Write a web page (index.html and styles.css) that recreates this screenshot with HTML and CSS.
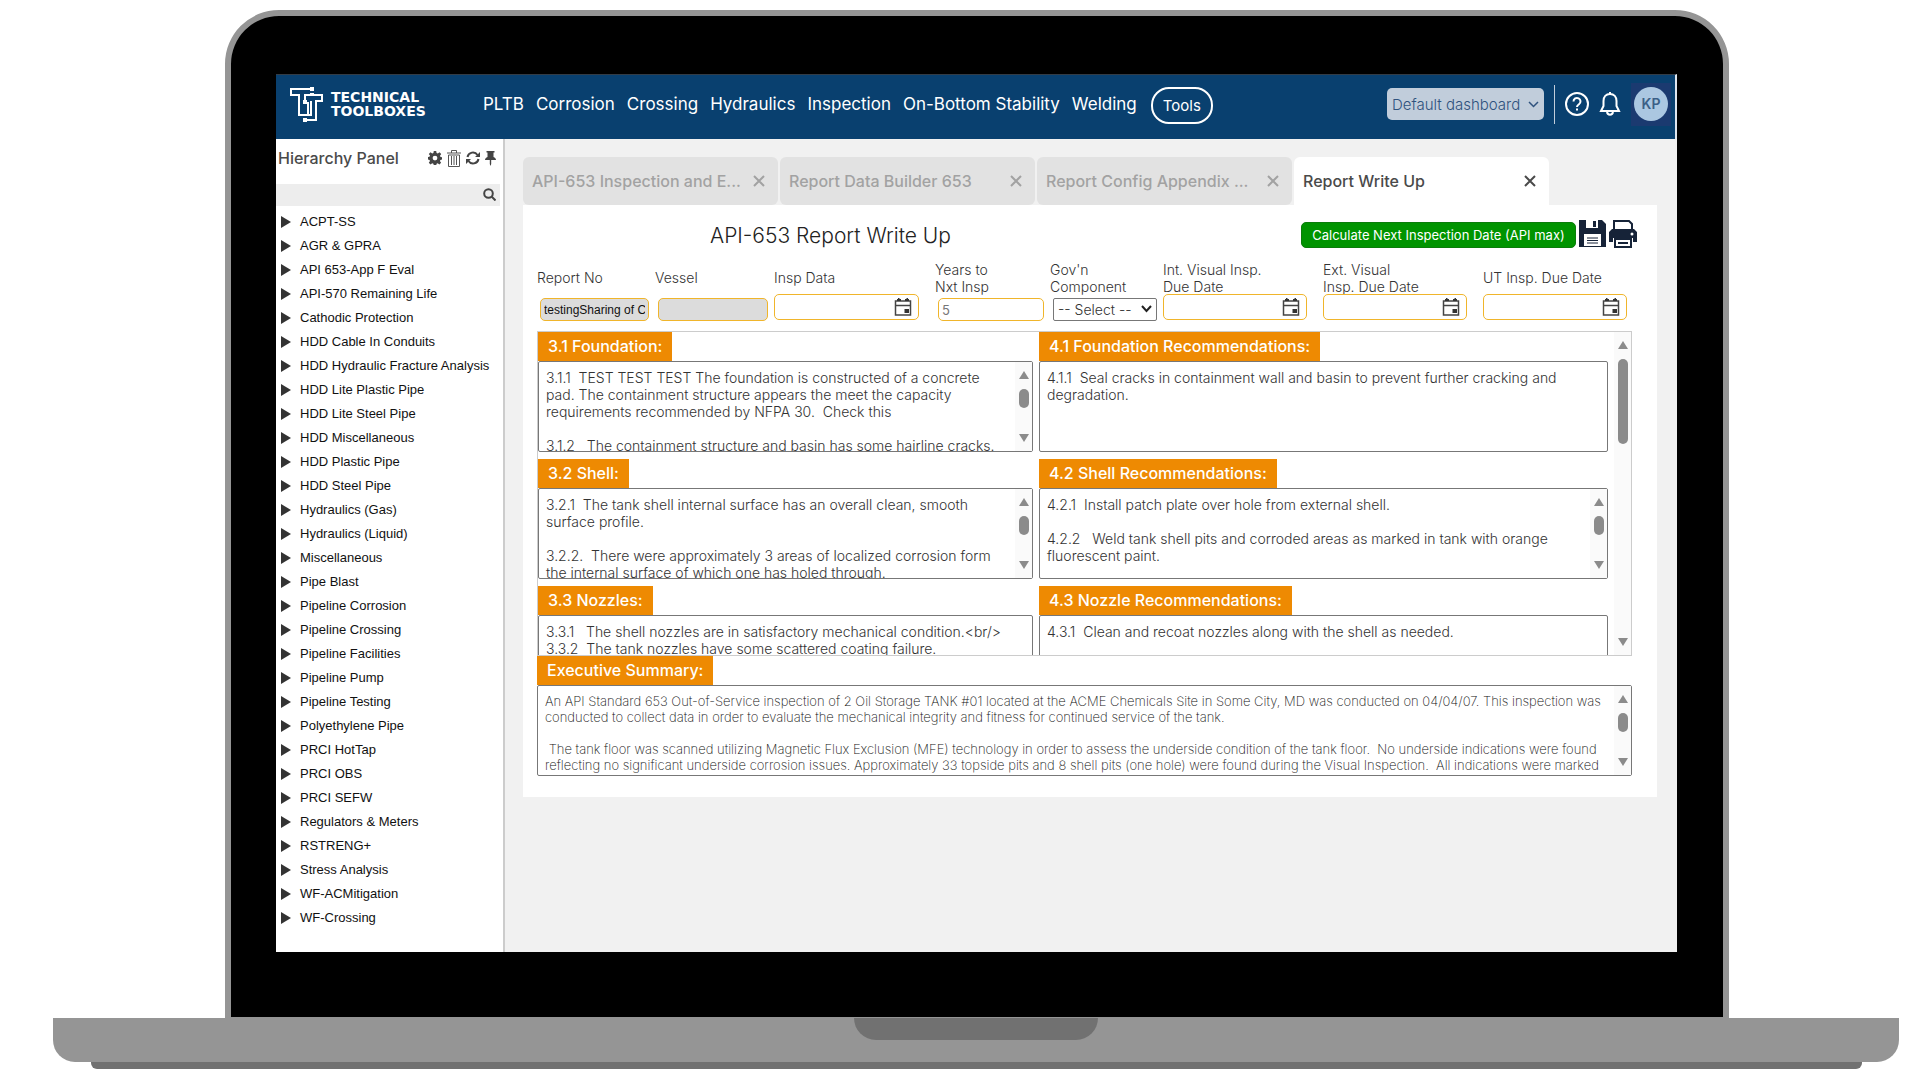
FILE: index.html
```html
<!DOCTYPE html>
<html lang="en">
<head>
<meta charset="utf-8">
<title>API-653 Report Write Up</title>
<link rel="stylesheet" href="styles.css">
</head>
<body>
<svg class="defs" aria-hidden="true">
  <symbol id="calendar" viewBox="0 0 18 18"><path d="M1.500 3h15v14h-15zM1.500 7.500h15" fill="none" stroke="#444" stroke-width="1.500"/><path d="M4 0h1.500v3H4zM12.500 0H14v3h-1.500zM3 1h4v2H3zM11 1h4v2h-4zM10.500 11h4.500v4h-4.500z" fill="#333"/></symbol>
  <symbol id="close" viewBox="0 0 12 12"><path d="M1 1l10 10M11 1L1 11" fill="none" stroke="currentColor" stroke-width="2"/></symbol>
  <symbol id="up" viewBox="0 0 10 8"><path d="M5 0l5 8H0z" fill="#8b8b8b"/></symbol>
  <symbol id="down" viewBox="0 0 10 8"><path d="M0 0h10L5 8z" fill="#8b8b8b"/></symbol>
</svg>
<div class="laptop">
  <div class="lid">
    <div class="screen">
      <header class="topbar">
        <a class="logo" href="#">
          <svg width="34" height="35" viewBox="0 0 34 35" fill="none" stroke="#fff" stroke-width="2"><path d="M22 2H2v6h8v20h9V15"/><path d="M16 14V8h17v6h-6v19H16M22 14v14h-3"/><path d="M21 0h4v4h-4zM14 13h4v4h-4zM14 31h4v4h-4zM21 6h4v3h-4z" fill="#fff" stroke="none"/></svg>
          <span class="brand">TECHNICAL<br>TOOLBOXES</span>
        </a>
        <nav class="nav">
          <a href="#">PLTB</a><a href="#">Corrosion</a><a href="#">Crossing</a><a href="#">Hydraulics</a><a href="#">Inspection</a><a href="#">On-Bottom Stability</a><a href="#">Welding</a>
        </nav>
        <button class="tools">Tools</button>
        <div class="account">
          <button class="dashboard">Default dashboard <svg width="11" height="7" viewBox="0 0 11 7"><path d="M1 1l4.500 4.500L10 1" fill="none" stroke="currentColor" stroke-width="1.500"/></svg></button>
          <span class="rule"></span>
          <button class="plain" aria-label="Help"><svg width="24" height="24" viewBox="0 0 24 24" fill="none" stroke="#fff" stroke-width="2"><circle cx="12" cy="12" r="11"/><path d="M8.500 9.500a3.500 3.500 0 1 1 5.500 2.800c-1.300.9-2 1.400-2 2.700M12 16.500v2"/></svg></button>
          <button class="plain" aria-label="Notifications"><svg width="22" height="24" viewBox="0 0 22 24" fill="none" stroke="#fff" stroke-width="2"><path d="M11 2c-4 0-6.500 3-6.500 7v5L2 19h18l-2.500-5V9c0-4-2.500-7-6.500-7zM11 0v2M8 20c.5 3.500 5.500 3.500 6 0"/></svg></button>
          <button class="user" aria-label="Account"><span>KP</span></button>
        </div>
      </header>
      <div class="body">
        <aside class="sidebar">
          <div class="panel-head">
            <h2>Hierarchy Panel</h2>
            <button class="plain" aria-label="Settings"><svg width="14" height="14" viewBox="0 0 14 14"><path d="M5.800 0h2.400l.4 2 1.200.5L11.500 1.300l1.700 1.700-1.200 1.700.5 1.200 1.500.3v2.400l-1.600.3-.5 1.200 1.200 1.700-1.700 1.700-1.700-1.200-1.100.5-.4 1.700H5.800l-.4-1.700-1.200-.5-1.700 1.200L.8 11.800 2 10.100l-.5-1.200L0 8.400V6l1.500-.3L2 4.500.8 2.900l1.700-1.700L4.200 2.400l1.200-.5zM7 4.700a2.400 2.400 0 1 0 0 4.800 2.400 2.400 0 0 0 0-4.800z" fill="#444" fill-rule="evenodd"/></svg></button>
            <button class="plain" aria-label="Delete"><svg width="14" height="17" viewBox="0 0 14 17" fill="none" stroke="#555"><path d="M0 3h14M4.500 3V.5h5V3M1.500 5v11.500h11V5zM4.500 6v9M7 6v9M9.500 6v9"/></svg></button>
            <button class="plain" aria-label="Refresh"><svg width="14" height="14" viewBox="0 0 14 14" fill="none" stroke="#444" stroke-width="2"><path d="M1.500 6A5.500 5.500 0 0 1 11.500 4M12.500 8A5.500 5.500 0 0 1 2.500 10"/><path d="M14 1v5H9zM0 13V8h5z" fill="#444" stroke="none"/></svg></button>
            <button class="plain" aria-label="Pin"><svg width="11" height="15" viewBox="0 0 11 15"><path d="M1.500 0h8v1.500h-1V6c1.500.6 2.500 1.500 2.500 3H6.200v4L5.500 15l-.7-2V9H0c0-1.500 1-2.400 2.500-3V1.500h-1z" fill="#444"/></svg></button>
          </div>
          <div class="search">
            <input type="text" aria-label="Search hierarchy">
            <svg width="13" height="13" viewBox="0 0 13 13" fill="none" stroke="#444" stroke-width="2"><circle cx="5.500" cy="5.500" r="4.300"/><path d="M8.500 8.500l4 4"/></svg>
          </div>
          <ul class="tree">
            <li>ACPT-SS</li><li>AGR &amp; GPRA</li><li>API 653-App F Eval</li><li>API-570 Remaining Life</li><li>Cathodic Protection</li><li>HDD Cable In Conduits</li><li>HDD Hydraulic Fracture Analysis</li><li>HDD Lite Plastic Pipe</li><li>HDD Lite Steel Pipe</li><li>HDD Miscellaneous</li><li>HDD Plastic Pipe</li><li>HDD Steel Pipe</li><li>Hydraulics (Gas)</li><li>Hydraulics (Liquid)</li><li>Miscellaneous</li><li>Pipe Blast</li><li>Pipeline Corrosion</li><li>Pipeline Crossing</li><li>Pipeline Facilities</li><li>Pipeline Pump</li><li>Pipeline Testing</li><li>Polyethylene Pipe</li><li>PRCI HotTap</li><li>PRCI OBS</li><li>PRCI SEFW</li><li>Regulators &amp; Meters</li><li>RSTRENG+</li><li>Stress Analysis</li><li>WF-ACMitigation</li><li>WF-Crossing</li>
          </ul>
        </aside>
        <main class="main">
          <div class="tabs">
            <div class="tab"><a href="#">API-653 Inspection and E...</a><button class="plain" aria-label="Close tab"><svg width="12" height="12"><use href="#close"/></svg></button></div>
            <div class="tab"><a href="#">Report Data Builder 653</a><button class="plain" aria-label="Close tab"><svg width="12" height="12"><use href="#close"/></svg></button></div>
            <div class="tab"><a href="#">Report Config Appendix ...</a><button class="plain" aria-label="Close tab"><svg width="12" height="12"><use href="#close"/></svg></button></div>
            <div class="tab active"><a href="#">Report Write Up</a><button class="plain" aria-label="Close tab"><svg width="12" height="12"><use href="#close"/></svg></button></div>
          </div>
          <section class="report">
            <div class="report-head">
              <h1>API-653 Report Write Up</h1>
              <button class="calc">Calculate Next Inspection Date (API max)</button>
              <button class="plain" aria-label="Save"><svg width="27" height="28" viewBox="0 0 27 28"><path d="M0 0h23l4 4v23H0z" fill="#162338"/><path d="M7 0h12v8H7zM5 14h17v12H5z" fill="#fff"/><path d="M14 1h3v6h-3z" fill="#162338"/><path d="M8 18h11M8 20.500h11M8 23h11" stroke="#162338"/></svg></button>
              <button class="plain" aria-label="Print"><svg width="28" height="28" viewBox="0 0 28 28"><path d="M5 10V1h15l3 3v6" fill="#fff" stroke="#162338" stroke-width="2"/><path d="M3 9h22l3 3v10h-4v-4H4v4H0V12z" fill="#162338"/><path d="M6 19h16v8H6z" fill="#fff" stroke="#162338" stroke-width="2"/><path d="M9 23h10" stroke="#162338" stroke-width="2"/><circle cx="23" cy="14" r="1.500" fill="#fff"/></svg></button>
            </div>
            <div class="fields">
              <div class="field text"><label for="f1">Report No</label><div class="control"><input id="f1" class="locked" type="text" value="testingSharing of Client" readonly></div></div>
              <div class="field text"><label for="f2">Vessel</label><div class="control"><input id="f2" class="locked" type="text" readonly></div></div>
              <div class="field"><label for="f3">Insp Data</label><div class="control"><div class="date"><input id="f3" type="text"><button class="plain" aria-label="Pick date"><svg width="18" height="18"><use href="#calendar"/></svg></button></div></div></div>
              <div class="field text"><label for="f4">Years to<br>Nxt Insp</label><div class="control"><input id="f4" type="text" value="5"></div></div>
              <div class="field text"><label for="f5">Gov'n<br>Component</label><div class="control select"><select id="f5"><option>-- Select --</option></select><svg class="chevron" width="11" height="8" viewBox="0 0 11 8"><path d="M1 1l4.500 5L10 1" fill="none" stroke="#222" stroke-width="2"/></svg></div></div>
              <div class="field"><label for="f6">Int. Visual Insp.<br>Due Date</label><div class="control"><div class="date"><input id="f6" type="text"><button class="plain" aria-label="Pick date"><svg width="18" height="18"><use href="#calendar"/></svg></button></div></div></div>
              <div class="field"><label for="f7">Ext. Visual<br>Insp. Due Date</label><div class="control"><div class="date"><input id="f7" type="text"><button class="plain" aria-label="Pick date"><svg width="18" height="18"><use href="#calendar"/></svg></button></div></div></div>
              <div class="field"><label for="f8">UT Insp. Due Date</label><div class="control"><div class="date"><input id="f8" type="text"><button class="plain" aria-label="Pick date"><svg width="18" height="18"><use href="#calendar"/></svg></button></div></div></div>
            </div>
            <div class="findings">
              <div class="grid">
                <div class="entry"><label for="t1">3.1 Foundation:</label><div class="box"><textarea id="t1">3.1.1  TEST TEST TEST The foundation is constructed of a concrete
pad. The containment structure appears the meet the capacity
requirements recommended by NFPA 30.  Check this

3.1.2   The containment structure and basin has some hairline cracks.</textarea><div class="bar"><svg width="10" height="8"><use href="#up"/></svg><i></i><svg width="10" height="8"><use href="#down"/></svg></div></div></div>
                <div class="entry"><label for="t2">4.1 Foundation Recommendations:</label><div class="box"><textarea id="t2">4.1.1  Seal cracks in containment wall and basin to prevent further cracking and
degradation.</textarea></div></div>
                <div class="entry"><label for="t3">3.2 Shell:</label><div class="box"><textarea id="t3">3.2.1  The tank shell internal surface has an overall clean, smooth
surface profile.

3.2.2.  There were approximately 3 areas of localized corrosion form
the internal surface of which one has holed through.</textarea><div class="bar"><svg width="10" height="8"><use href="#up"/></svg><i></i><svg width="10" height="8"><use href="#down"/></svg></div></div></div>
                <div class="entry"><label for="t4">4.2 Shell Recommendations:</label><div class="box"><textarea id="t4">4.2.1  Install patch plate over hole from external shell.

4.2.2   Weld tank shell pits and corroded areas as marked in tank with orange
fluorescent paint.</textarea><div class="bar"><svg width="10" height="8"><use href="#up"/></svg><i></i><svg width="10" height="8"><use href="#down"/></svg></div></div></div>
                <div class="entry"><label for="t5">3.3 Nozzles:</label><div class="box"><textarea id="t5">3.3.1   The shell nozzles are in satisfactory mechanical condition.&lt;br/&gt;
3.3.2  The tank nozzles have some scattered coating failure.</textarea></div></div>
                <div class="entry"><label for="t6">4.3 Nozzle Recommendations:</label><div class="box"><textarea id="t6">4.3.1  Clean and recoat nozzles along with the shell as needed.</textarea></div></div>
              </div>
              <div class="bar tall"><svg width="10" height="8"><use href="#up"/></svg><i></i><svg width="10" height="8"><use href="#down"/></svg></div>
            </div>
            <div class="entry summary"><label for="t7">Executive Summary:</label><div class="box"><textarea id="t7">An API Standard 653 Out-of-Service inspection of 2 Oil Storage TANK #01 located at the ACME Chemicals Site in Some City, MD was conducted on 04/04/07. This inspection was
conducted to collect data in order to evaluate the mechanical integrity and fitness for continued service of the tank.

 The tank floor was scanned utilizing Magnetic Flux Exclusion (MFE) technology in order to assess the underside condition of the tank floor.  No underside indications were found
reflecting no significant underside corrosion issues. Approximately 33 topside pits and 8 shell pits (one hole) were found during the Visual Inspection.  All indications were marked</textarea><div class="bar"><svg width="10" height="8"><use href="#up"/></svg><i></i><svg width="10" height="8"><use href="#down"/></svg></div></div></div>
          </section>
        </main>
      </div>
    </div>
  </div>
  <div class="base"><div class="notch"></div></div>
  <div class="foot"></div>
</div>
</body>
</html>
```
FILE: styles.css
```css
* { box-sizing: border-box; }
body { margin: 0; background: #fff; font-family: Inter, "Liberation Sans", sans-serif; font-size: 14px; color: #4a4a4a; }
button, input, select, textarea { font: inherit; color: inherit; margin: 0; }
button { cursor: pointer; }
a { color: inherit; text-decoration: none; }
h1, h2 { margin: 0; }
svg { display: block; flex: none; }
.defs { position: absolute; width: 0; height: 0; }
.plain { display: flex; padding: 0; border: 0; background: none; }

/* laptop frame */
.laptop { padding: 10px 21px 10px 53px; }
.lid { margin: 0 170px 0 172px; padding: 58px 46px 65px 45px; border: 6px solid #959595; border-bottom-width: 1px; border-radius: 54px 54px 0 0; background: #000; }
.base { height: 44px; border-radius: 0 0 22px 22px; background: #959595; }
.notch { width: 244px; height: 22px; margin: 0 auto; border-radius: 0 0 22px 22px; background: #717171; }
.foot { height: 7px; margin: 0 37px 0 38px; border-radius: 0 0 6px 6px; background: #717171; }
.screen { background: #f1f1f1; }

/* top bar */
.topbar { display: flex; align-items: center; height: 65px; padding: 0 4px 4px 13px; border-top: 1px solid #333c46; border-right: 2px solid #dfe6ee; background: #09406f; color: #fff; }
.logo { display: flex; align-items: center; gap: 8px; width: 194px; padding-bottom: 2px; }
.brand { font: bold 14px/14px "DejaVu Sans", sans-serif; }
.nav { display: flex; gap: 12px; padding-bottom: 3px; font-size: 17px; font-weight: 400; }
.nav a { white-space: nowrap; }
.tools { height: 37px; margin-left: 14px; padding: 0 10px; border: 2px solid #fff; border-radius: 18px; background: none; font-size: 15px; }
.account { display: flex; align-items: center; gap: 10px; margin-left: auto; padding-bottom: 2px; }
.dashboard { display: flex; align-items: center; justify-content: space-between; width: 157px; height: 32px; padding: 0 5px; border: 0; border-radius: 5px; background: #c1cddb; color: #2f527e; font-size: 15px; font-weight: 300; white-space: nowrap; }
.rule { width: 1px; height: 39px; background: #c1cddb; }
.user { display: flex; align-items: center; justify-content: center; width: 40px; height: 43px; padding: 0; border: 0; background: #1b3a70; }
.user span { width: 34px; border-radius: 50%; background: #abc7e1; color: #3b5f86; font-size: 14px; font-weight: 600; line-height: 34px; }

/* hierarchy */
.body { display: flex; }
.sidebar { flex: none; width: 229px; padding-bottom: 22px; border-right: 2px solid #ccc; background: #fff; }
.panel-head { display: flex; align-items: center; gap: 5px; height: 45px; padding: 0 7px 7px 2px; color: #4a4a4a; }
.panel-head h2 { margin-right: auto; font-size: 16px; font-weight: 500; white-space: nowrap; }
.search { display: flex; align-items: center; height: 22px; margin-right: 3px; padding: 0 4px 2px 0; background: #ededed; }
.search input { flex: 1; min-width: 0; height: 20px; border: 0; background: none; }
.tree { margin: 4px 0 0; padding: 0; list-style: none; font: 13px/24px "Liberation Sans", Arial, sans-serif; color: #111; }
.tree li { display: flex; align-items: center; gap: 9px; padding-left: 5px; white-space: nowrap; }
.tree li::before { content: ""; border: solid transparent; border-width: 6px 0 6px 10px; border-left-color: #333; }

/* tabs */
.main { flex: 1; min-width: 0; padding: 18px 20px 0 18px; }
.tabs { display: flex; gap: 2px; }
.tab { display: flex; align-items: center; justify-content: space-between; width: 255px; height: 48px; padding: 0 13px 0 9px; border-radius: 6px; background: #e2e2e2; color: #a2a2a2; font-size: 16px; font-weight: 500; white-space: nowrap; }
.tab.active { border-radius: 6px 6px 0 0; background: #fff; color: #4a4a4a; }

/* report */
.report { padding: 14px 20px 21px 14px; background: #fff; }
.report-head { display: flex; align-items: flex-end; gap: 3px; height: 29px; padding-left: 173px; }
.report-head h1 { margin-right: auto; font-size: 21px; font-weight: 300; line-height: 25px; color: #222; white-space: nowrap; }
.calc { width: 275px; height: 26px; padding: 0; border: 1px solid #0a7d0a; border-radius: 5px; background: #009400; color: #fff; font-size: 13px; white-space: nowrap; }
.fields { display: grid; grid-template-columns: 118fr 119fr 161fr 115fr 113fr 160fr 160fr 144fr; margin: 13px 10px 10px 0; }
.field { min-width: 0; padding-right: 16px; }
.field:last-child { padding-right: 0; }
.field.text { padding-right: 6px; }
.field label { display: flex; align-items: center; height: 33px; font-weight: 300; line-height: 17px; color: #333; white-space: nowrap; }
.control { display: flex; height: 27px; }
.text .control { align-items: flex-end; padding-left: 3px; }
.control > input { width: 100%; height: 23px; padding: 0 3px; border: 1px solid #f0b52b; border-radius: 5px; background: #fff; color: #777; font-size: 13px; }
.control > .locked { background: #dcdcdc; color: #111; font-family: "Liberation Sans", Arial, sans-serif; font-size: 12px; }
.date { display: flex; align-items: center; width: 100%; height: 26px; padding-right: 6px; border: 1px solid #f0b52b; border-radius: 5px; background: #fff; }
.date input { flex: 1; min-width: 0; height: 22px; border: 0; background: none; }
.select { position: relative; }
.select select { width: 100%; height: 23px; padding: 0 4px; border: 1px solid #777; border-radius: 2px; background: #fff; color: #333; font-weight: 300; appearance: none; }
.chevron { position: absolute; right: 5px; bottom: 8px; pointer-events: none; }

.findings { display: flex; justify-content: space-between; height: 325px; margin-right: 5px; overflow: hidden; border: 1px solid #ccc; }
.grid { flex: 1; min-width: 0; display: grid; grid-template-columns: 495fr 569fr; gap: 7px 6px; align-content: start; margin-right: 6px; }
.entry { min-width: 0; }
.entry label { display: inline-block; padding: 0 10px; background: #ee8a02; color: #fff; font-size: 16px; font-weight: 500; line-height: 29px; vertical-align: top; white-space: nowrap; }
.box { display: flex; height: 91px; border: 1px solid #777; border-radius: 2px; background: #fff; }
.box textarea { flex: 1; min-width: 0; padding: 7px 0 0 7px; border: 0; background: none; resize: none; overflow: hidden; white-space: pre; font-weight: 300; line-height: 17px; color: #333; }
.summary { margin-right: 5px; }
.summary textarea { font-size: 13px; font-weight: 200; line-height: 16px; color: #111; }
.bar { flex: none; display: flex; flex-direction: column; align-items: center; width: 17px; padding: 9px 0; background: #fafafa; }
.bar i { width: 10px; height: 19px; margin: 10px 0 auto; border-radius: 5px; background: #8b8b8b; }
.bar.tall i { height: 85px; }
```
